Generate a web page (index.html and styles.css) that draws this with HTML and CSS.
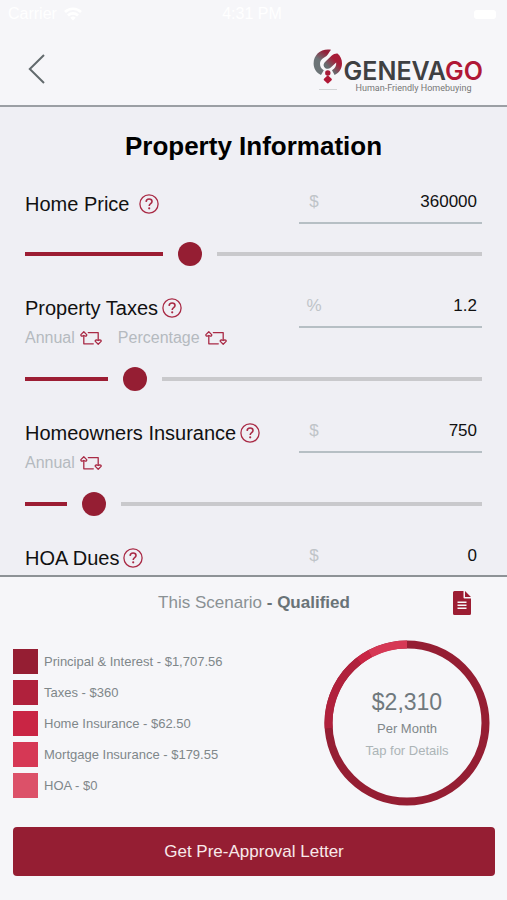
FILE: index.html
```html
<!DOCTYPE html>
<html lang="en">
<head>
<meta charset="utf-8">
<meta name="viewport" content="width=device-width, initial-scale=1">
<title>GenevaGo - Property Information</title>
<link rel="stylesheet" href="styles.css">
</head>
<body>
<svg class="sprite" aria-hidden="true">
  <symbol id="help" viewBox="0 0 20 20">
    <circle cx="10" cy="10" r="9.1" fill="none" stroke="currentColor" stroke-width="1.3"/>
    <path d="M7.1 7.9C7.2 6 8.4 5 10.1 5c1.7 0 2.9 1 2.9 2.5 0 2.2-2.8 2.1-2.8 4.4" fill="none" stroke="currentColor" stroke-width="1.6"/>
    <circle cx="10.2" cy="14.3" r="1.1" fill="currentColor"/>
  </symbol>
  <symbol id="swap" viewBox="0 0 22 14">
    <g fill="none" stroke="currentColor" stroke-width="1.3" stroke-linecap="round" stroke-linejoin="round">
      <path d="M3.800 5.200V12.800H13.300M8.300 1.600H18.200V8.800"/>
      <path d="M3.800.8 6.700 3.600C7 4.600 6.300 5.200 5.300 5.100L3.800 4.500 2.300 5.100C1.300 5.200.6 4.600.9 3.600Z"/>
      <path d="M18.200 13.200 15.300 10.400C15 9.400 15.700 8.800 16.700 8.900L18.200 9.500 19.700 8.900C20.700 8.800 21.400 9.400 21.100 10.400Z"/>
    </g>
  </symbol>
</svg>

<header class="header">
  <div class="status">
    <span class="carrier">Carrier
      <svg width="18" height="14" viewBox="0 0 18 14" aria-hidden="true"><g fill="none" stroke="currentColor" stroke-width="2.6"><path d="M1 5a11.500 11.500 0 0 1 16 0M4 8.500a7 7 0 0 1 10 0"/></g><path d="M9 13.500 6.300 10.800a4 4 0 0 1 5.400 0Z" fill="currentColor"/></svg>
    </span>
    <span class="time">4:31 PM</span>
    <span class="battery"></span>
  </div>
  <div class="nav">
    <button class="back" type="button" aria-label="Back">
      <svg width="18" height="32" viewBox="0 0 18 32"><path d="M16 2 1.800 16 16 30" fill="none" stroke="currentColor" stroke-width="2"/></svg>
    </button>
    <div class="brand">
      <svg class="mark" width="30" height="42" viewBox="0 0 30 42" aria-hidden="true">
        <defs>
          <linearGradient id="ringLeft" gradientUnits="userSpaceOnUse" x1="4" y1="22" x2="16" y2="1"><stop offset=".45" stop-color="#6c7477"/><stop offset=".85" stop-color="#94203a"/></linearGradient>
          <linearGradient id="ringRight" gradientUnits="userSpaceOnUse" x1="12" y1="22" x2="26" y2="8"><stop offset=".25" stop-color="#656d70"/><stop offset=".75" stop-color="#a81c38"/></linearGradient>
        </defs>
        <path d="M18 .8C9-1 .6 5 .6 14.500c0 5 2.600 9.200 7.400 11.600L10.800 21.200C8.200 19.800 7 17.500 7 14.800 7 10 10.500 9.500 13.500 7 15.600 5.300 16 3 18 .8Z" fill="url(#ringLeft)"/>
        <path d="M24.500 4.500C27.500 7 29 10.400 29 14.500c0 5-2.600 9.200-7.400 11.600L19 21.200c3-1.700 4.500-4.400 4.200-7.700L17.500 18.800C15.500 20.600 12.600 20 11.200 18 10.200 16.400 10.500 14.500 12 13L18.500 6.800C20.500 5.200 22.500 4.300 24.500 4.500Z" fill="url(#ringRight)"/>
        <circle cx="14.800" cy="24" r="2.700" fill="#a81c38"/>
        <path d="M14.800 27.500 18 30.500 14.800 33.500 11.600 30.500Z" fill="#b01836" stroke="#b01836" stroke-width="1.800" stroke-linejoin="round"/>
        <path d="M6 40.500h18" stroke="#d2d4d6" stroke-width="1"/>
      </svg>
      <div class="words">
        <span class="name">GENEVA<b>GO</b></span>
        <span class="tagline">Human-Friendly Homebuying</span>
      </div>
    </div>
  </div>
</header>

<main class="main">
  <h1>Property Information</h1>

  <section class="field">
    <div class="caption"><div class="title wide"><label for="price">Home Price</label><button class="icon" type="button" aria-label="About home price"><svg width="20" height="20"><use href="#help"/></svg></button></div></div>
    <div class="entry"><span class="unit">$</span><input id="price" type="text" inputmode="decimal" value="360000"></div>
    <input class="slider" type="range" min="0" max="1000000" value="360000" aria-label="Home price" style="--value: .36">
  </section>

  <section class="field">
    <div class="caption">
      <div class="title"><label for="taxes">Property Taxes</label><button class="icon" type="button" aria-label="About property taxes"><svg width="20" height="20"><use href="#help"/></svg></button></div>
      <div class="toggles">
        <button type="button">Annual <svg width="22" height="14"><use href="#swap"/></svg></button>
        <button type="button">Percentage <svg width="22" height="14"><use href="#swap"/></svg></button>
      </div>
    </div>
    <div class="entry"><span class="unit">%</span><input id="taxes" type="text" inputmode="decimal" value="1.2"></div>
    <input class="slider" type="range" min="0" max="5" step="0.1" value="1.2" aria-label="Property taxes" style="--value: .24">
  </section>

  <section class="field">
    <div class="caption">
      <div class="title"><label for="insurance">Homeowners Insurance</label><button class="icon" type="button" aria-label="About homeowners insurance"><svg width="20" height="20"><use href="#help"/></svg></button></div>
      <div class="toggles">
        <button type="button">Annual <svg width="22" height="14"><use href="#swap"/></svg></button>
      </div>
    </div>
    <div class="entry"><span class="unit">$</span><input id="insurance" type="text" inputmode="decimal" value="750"></div>
    <input class="slider" type="range" min="0" max="5000" value="750" aria-label="Homeowners insurance" style="--value: .15">
  </section>

  <section class="field">
    <div class="caption"><div class="title"><label for="hoa">HOA Dues</label><button class="icon" type="button" aria-label="About HOA dues"><svg width="20" height="20"><use href="#help"/></svg></button></div></div>
    <div class="entry"><span class="unit">$</span><input id="hoa" type="text" inputmode="decimal" value="0"></div>
  </section>
</main>

<footer class="summary">
  <div class="scenario">
    <p>This Scenario <b>- Qualified</b></p>
    <button class="icon document" type="button" aria-label="View document">
      <svg width="18" height="24" viewBox="0 0 18 24"><path d="M1.500 0H10.500V6.500A1 1 0 0 0 11.500 7.500H18V22.500A1.500 1.500 0 0 1 16.500 24H1.500A1.500 1.500 0 0 1 0 22.500V1.500A1.500 1.500 0 0 1 1.500 0ZM12 0 18 6H12Z" fill="currentColor"/><path d="M4.500 11.200h9M4.500 14.200h9M4.500 17.200h9" stroke="#f6f6f9" stroke-width="1.500"/></svg>
    </button>
  </div>
  <div class="breakdown">
    <ul class="legend">
      <li class="principal">Principal &amp; Interest - $1,707.56</li>
      <li class="tax">Taxes - $360</li>
      <li class="home">Home Insurance - $62.50</li>
      <li class="mortgage">Mortgage Insurance - $179.55</li>
      <li class="dues">HOA - $0</li>
    </ul>
    <button class="ring" type="button">
      <svg class="chart" width="166" height="166" viewBox="0 0 166 166" aria-hidden="true">
        <g fill="none" stroke-width="8" transform="rotate(-90 83 83)">
          <circle cx="83" cy="83" r="78.500" pathLength="2310" stroke="#951e33"/>
          <circle cx="83" cy="83" r="78.500" pathLength="2310" stroke="#b0213c" stroke-dasharray="360 1950" stroke-dashoffset="-1708"/>
          <circle cx="83" cy="83" r="78.500" pathLength="2310" stroke="#c92544" stroke-dasharray="62 2248" stroke-dashoffset="-2068"/>
          <circle cx="83" cy="83" r="78.500" pathLength="2310" stroke="#d63855" stroke-dasharray="180 2130" stroke-dashoffset="-2130"/>
        </g>
      </svg>
      <span class="total">$2,310</span>
      <span class="period">Per Month</span>
      <span class="hint">Tap for Details</span>
    </button>
  </div>
  <button class="primary" type="button">Get Pre-Approval Letter</button>
</footer>
</body>
</html>
```
FILE: styles.css
```css
* { box-sizing: border-box; }

body {
  margin: 0;
  height: 100vh;
  display: flex;
  flex-direction: column;
  overflow: hidden;
  background: #efeff4;
  color: #111;
  font-family: "Liberation Sans", Arial, sans-serif;
}

button, input { font: inherit; color: inherit; margin: 0; }

button {
  display: inline-flex;
  align-items: center;
  padding: 0;
  border: 0;
  background: none;
  cursor: pointer;
}

svg { display: block; flex: none; }
.sprite { position: absolute; width: 0; height: 0; }
.icon { color: #a92a45; }

/* Header */
.header {
  flex: none;
  border-bottom: 2px solid #9b9fa4;
  background: #f6f6f9;
}

.status {
  display: grid;
  grid-template-columns: 1fr auto 1fr;
  align-items: center;
  height: 28px;
  padding: 0 11px 0 8px;
  color: #fff;
  font-size: 16px;
}

.carrier { display: flex; align-items: center; gap: 7px; }
.time { font-weight: normal; }

.battery {
  justify-self: end;
  width: 22px;
  height: 9px;
  border-radius: 3px;
  background: #fff;
}

.nav {
  display: flex;
  align-items: center;
  justify-content: space-between;
  height: 77px;
  padding: 4px 24px 0 28px;
}

.back { color: #626a6d; }
.brand { display: flex; align-items: flex-start; gap: 1px; padding-top: 4px; }
.words { display: flex; flex-direction: column; padding-top: 11px; }

.name {
  color: #3f4042;
  font: 600 25px/23px Inter, sans-serif;
}

.name b { color: #b01836; font-weight: 600; }

.tagline {
  padding-left: 12px;
  color: #777;
  font: 9px/10px Roboto, sans-serif;
}

/* Form */
.main {
  flex: 1;
  min-height: 0;
  overflow: hidden;
  padding: 24px 25px 0;
}

h1 {
  margin: 0 0 20px;
  color: #000;
  font-size: 26px;
  line-height: 30px;
  text-align: center;
}

.field {
  display: grid;
  grid-template-columns: 1fr 183px;
  row-gap: 18px;
  margin-bottom: 19px;
}

.caption { padding-top: 10px; }

.title {
  display: flex;
  align-items: center;
  gap: 4px;
  height: 26px;
  font-size: 20px;
  white-space: nowrap;
}

.title.wide { gap: 10px; }

.toggles {
  display: flex;
  align-items: center;
  gap: 16px;
  height: 28px;
  padding-top: 6px;
  color: #b5babf;
  font-size: 16px;
}

.toggles button { gap: 5px; }
.toggles svg { color: #a92a45; }

.entry {
  display: flex;
  align-items: center;
  align-self: start;
  height: 43px;
  padding-top: 1px;
  border-bottom: 2px solid #b6bfc4;
}

.unit {
  width: 30px;
  color: #bfc4c8;
  font-size: 17px;
  text-align: center;
}

.entry input {
  flex: 1;
  min-width: 0;
  padding: 0 5px 0 0;
  border: 0;
  outline: 0;
  background: none;
  font-size: 17px;
  text-align: right;
}

.slider {
  grid-column: 1 / -1;
  height: 24px;
  margin: 0 -12px;
  appearance: none;
  background: none;
}

/* The line breaks off 27px either side of the thumb. */
.slider::-webkit-slider-runnable-track {
  height: 24px;
  background: linear-gradient(to right,
    #9c1d33 calc(100% * var(--value) - 27px),
    transparent 0 calc(100% * var(--value) + 27px),
    #c9c9cc 0) center / calc(100% - 24px) 4px no-repeat;
}

.slider::-webkit-slider-thumb {
  appearance: none;
  width: 24px;
  height: 24px;
  border-radius: 50%;
  background: #951e33;
}

/* Summary */
.summary {
  flex: none;
  padding: 0 12px 24px 13px;
  border-top: 2px solid #8d9296;
  background: #f6f6f9;
}

.scenario {
  display: grid;
  grid-template-columns: 1fr auto 1fr;
  align-items: center;
  height: 51px;
  color: #8a9194;
  font-size: 17px;
}

.scenario p { grid-column: 2; margin: 0; }
.scenario b { color: #697377; }
.document { justify-self: end; margin-right: 24px; color: #9c1d33; }

.breakdown {
  display: flex;
  align-items: center;
  justify-content: space-between;
  padding: 12px 5px 21px 0;
}

.legend {
  display: grid;
  gap: 6px;
  margin: 0;
  padding: 0;
  list-style: none;
  color: #7f878a;
  font-size: 13px;
  line-height: 25px;
}

.legend li { display: flex; gap: 6px; }
.legend li::before { content: ""; width: 25px; height: 25px; background: var(--swatch); }
.principal { --swatch: #951e33; }
.tax { --swatch: #b0213c; }
.home { --swatch: #c92544; }
.mortgage { --swatch: #d63855; }
.dues { --swatch: #dc5169; }

.ring {
  display: grid;
  grid-template: 47px 30px 23px 20px 46px / 166px;
  align-items: center;
  justify-items: center;
}

.chart { grid-area: 1 / 1 / -1 / 2; }
.total { grid-area: 2 / 1; color: #70797e; font-size: 23px; }
.period { grid-area: 3 / 1; color: #7f878a; font-size: 13px; }
.hint { grid-area: 4 / 1; color: #acb4b7; font-size: 13px; }

.primary {
  display: block;
  width: 100%;
  height: 49px;
  border-radius: 4px;
  background: #951e33;
  color: #f8e9ea;
  font-size: 17px;
  text-align: center;
}
```
